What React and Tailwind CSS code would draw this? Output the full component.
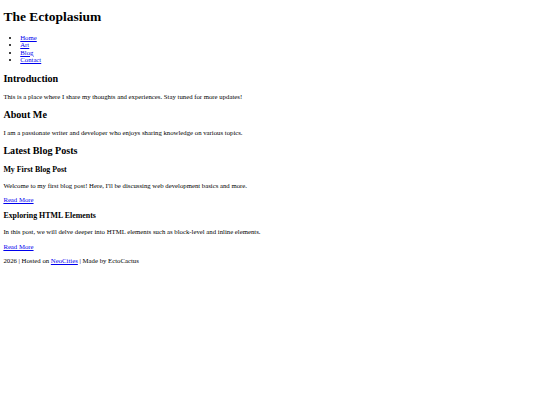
export default function App() {
  const link = "text-[#0000ee] underline";
  return (
    <div className="bg-white min-h-[405px] px-[3.375px] pb-[3.375px] font-['Liberation_Serif',serif] text-black text-[6.75px] leading-[1.13]">
      <header>
        <h1 className="text-[13.5px] leading-[1.15] font-bold my-[9.05px]">The Ectoplasium</h1>
        <nav>
          <ul className="list-disc my-[6.75px] pl-[16.875px]">
            <li><a href="#" className={link}>Home</a></li>
            <li><a href="#" className={link}>Art</a></li>
            <li><a href="#" className={link}>Blog</a></li>
            <li><a href="#" className={link}>Contact</a></li>
          </ul>
        </nav>
      </header>
      <main>
        <section>
          <h2 className="text-[10.125px] leading-[1.15] font-bold my-[8.4px]">Introduction</h2>
          <p className="my-[6.75px]">This is a place where I share my thoughts and experiences. Stay tuned for more updates!</p>
        </section>
        <section>
          <h2 className="text-[10.125px] leading-[1.15] font-bold my-[8.4px]">About Me</h2>
          <p className="my-[6.75px]">I am a passionate writer and developer who enjoys sharing knowledge on various topics.</p>
        </section>
        <section>
          <h2 className="text-[10.125px] leading-[1.15] font-bold my-[8.4px]">Latest Blog Posts</h2>
          <article>
            <h3 className="text-[7.9px] leading-[1.15] font-bold my-[7.9px]">My First Blog Post</h3>
            <p className="my-[6.75px]">Welcome to my first blog post! Here, I'll be discussing web development basics and more.</p>
            <a href="#" className={link}>Read More</a>
          </article>
          <article>
            <h3 className="text-[7.9px] leading-[1.15] font-bold my-[7.9px]">Exploring HTML Elements</h3>
            <p className="my-[6.75px]">In this post, we will delve deeper into HTML elements such as block-level and inline elements.</p>
            <a href="#" className={link}>Read More</a>
          </article>
        </section>
      </main>
      <footer>
        <p className="my-[6.75px]">2026 | Hosted on <a href="#" className={link}>NeoCities</a> | Made by EctoCactus</p>
      </footer>
    </div>
  );
}
